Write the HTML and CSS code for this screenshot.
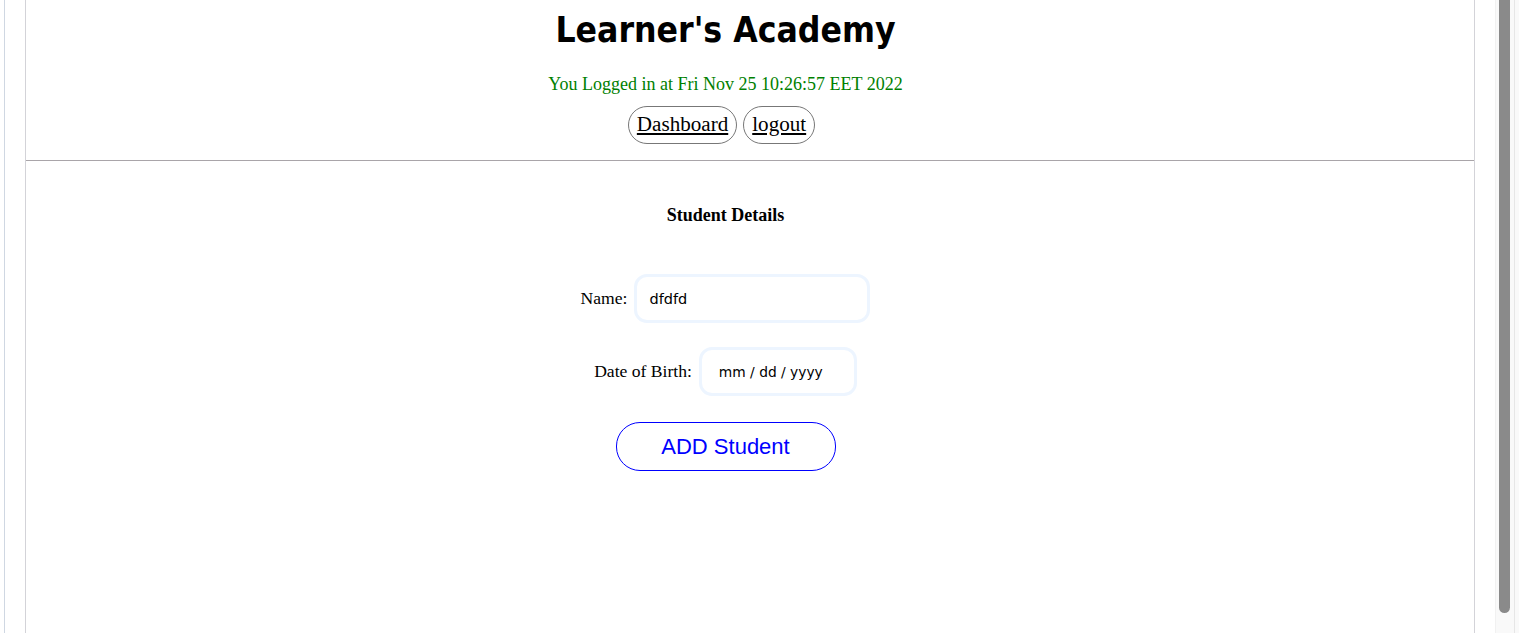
FILE: index.html
```html
<!DOCTYPE html>
<html lang="en">
<head>
<meta charset="utf-8">
<title>Learner's Academy</title>
<link rel="stylesheet" href="styles.css">
</head>
<body>
<div class="frame">
  <div class="container">
    <header class="header">
      <h1 class="title">Learner's Academy</h1>
      <p class="login-info">You Logged in at Fri Nov 25 10:26:57 EET 2022</p>
      <nav class="nav">
        <a class="nav-link" href="#">Dashboard</a>
        <a class="nav-link" href="#">logout</a>
      </nav>
    </header>
    <hr class="divider">
    <main class="content">
      <h4 class="section-title">Student Details</h4>
      <form class="student-form">
        <div class="form-row">
          <label class="form-label" for="name">Name:</label>
          <input class="form-input name-input" id="name" type="text" value="dfdfd">
        </div>
        <div class="form-row">
          <label class="form-label" for="dob">Date of Birth:</label>
          <input class="form-input date-input" id="dob" type="text" placeholder="mm / dd / yyyy">
        </div>
        <button class="submit-btn" type="button">ADD Student</button>
      </form>
    </main>
  </div>
</div>
<div class="scrollbar"><div class="scroll-thumb"></div></div>
</body>
</html>
```
FILE: styles.css
```css
html, body {
  margin: 0;
  padding: 0;
  height: 633px;
  overflow: hidden;
  background: #ffffff;
}

body {
  font-family: "Liberation Serif", "Times New Roman", serif;
  font-size: 17.6px;
  color: #000;
}

.frame {
  margin-left: 4px;
  padding-left: 20px;
  border-left: 1px solid #cfd7e2;
  height: 633px;
  box-sizing: border-box;
}

.container {
  width: 1450px;
  height: 633px;
  box-sizing: border-box;
  border-left: 1px solid #d3d3d8;
  border-right: 1px solid #d3d3d8;
}

.header {
  text-align: center;
  padding-right: 49px;
  padding-top: 8px;
}

.title {
  margin: 0;
  font-family: "DejaVu Sans Condensed", "DejaVu Sans", sans-serif;
  font-stretch: condensed;
  font-weight: bold;
  font-size: 35.2px;
  line-height: 43px;
}

.login-info {
  margin: 23px 0 0;
  color: #008000;
  font-size: 18px;
  line-height: 20px;
}

.nav {
  margin-top: 12px;
  display: flex;
  justify-content: center;
  gap: 6px;
  padding-right: 8px;
}

.nav-link {
  display: inline-block;
  font-size: 21.1px;
  line-height: 24px;
  padding: 5px 8px 7px;
  border: 1px solid #777;
  border-radius: 20px;
  color: #000;
  text-decoration: underline;
}

.divider {
  margin: 16px 0 0;
  border: 0;
  border-top: 1px solid #a9a5a9;
  height: 0;
}

.content {
  padding-top: 44px;
  padding-right: 49px;
  text-align: center;
}

.section-title {
  margin: 0;
  font-size: 18px;
  line-height: 20px;
  font-weight: bold;
}

.student-form {
  margin-top: 49px;
  display: flex;
  flex-direction: column;
  align-items: center;
}

.form-row {
  display: flex;
  align-items: center;
  gap: 7px;
  margin-bottom: 24px;
}

.form-label {
  font-size: 17.6px;
}

.form-input {
  box-sizing: border-box;
  height: 49px;
  border: 3px solid #edf5ff;
  border-radius: 13px;
  outline: none;
  font-family: "DejaVu Sans", sans-serif;
  font-size: 14.5px;
  color: #000;
  background: #fff;
}

.name-input {
  width: 236px;
  padding: 0 12px;
}

.date-input {
  width: 158px;
  padding: 0 10px 0 17px;
  font-size: 13.8px;
}

.date-input::placeholder {
  color: #000;
  opacity: 1;
}

.submit-btn {
  margin-top: 2px;
  width: 220px;
  height: 49px;
  box-sizing: border-box;
  border: 1px solid #0000ff;
  border-radius: 24px;
  background: #fff;
  color: #0000ff;
  font-family: "Liberation Sans", Arial, sans-serif;
  font-size: 22px;
  cursor: pointer;
}

.scrollbar {
  position: fixed;
  top: 0;
  right: 0;
  width: 24px;
  height: 633px;
  background: #f9f9f9;
  border-left: 1px solid #f1f1f1;
  box-sizing: border-box;
}

.scrollbar::after {
  content: "";
  position: absolute;
  top: 0;
  right: 4px;
  width: 1px;
  height: 100%;
  background: #e6e6e6;
}

.scroll-thumb {
  position: absolute;
  left: 3px;
  top: 0;
  width: 11px;
  height: 613px;
  background: #8a8a8a;
  border-radius: 0 0 6px 6px;
}
```
